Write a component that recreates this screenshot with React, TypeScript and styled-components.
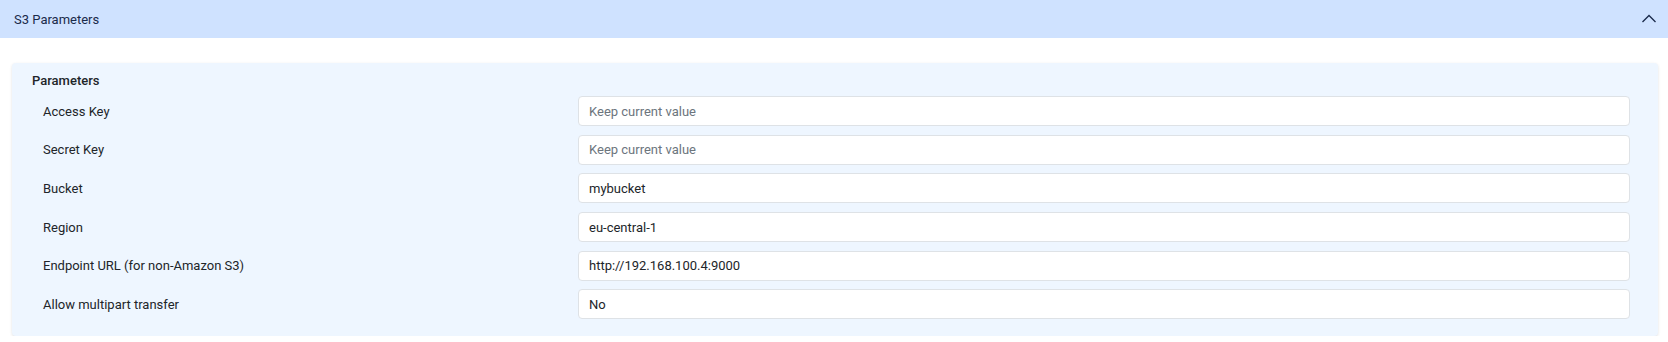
import React from "react";
import styled, { createGlobalStyle } from "styled-components";

const Global = createGlobalStyle`
  html, body { margin: 0; padding: 0; background: #ffffff; }
  body { font-family: Roboto, "Liberation Sans", Arial, sans-serif; font-size: 13px; color: #212529; }
  * { box-sizing: border-box; }
`;

const Header = styled.div`
  height: 38px;
  background: #cfe2ff;
  color: #1a2a4a;
  display: flex;
  align-items: center;
  justify-content: space-between;
  padding: 0 11px 0 14px;
  font-size: 13px;
`;

const Body = styled.div`
  padding: 25px 10px 0 12px;
`;

const Card = styled.div`
  background: #eef6ff;
  border-radius: 4px;
  box-shadow: 0 1px 3px rgba(0, 0, 0, 0.12);
  padding: 9px 28px 17px 20px;
`;

const Title = styled.div`
  font-weight: 500;
  line-height: 18px;
  margin-bottom: 6px;
  color: #212529;
`;

const Grid = styled.div`
  display: grid;
  grid-template-columns: 546px 1fr;
  row-gap: 8.7px;
`;

const Label = styled.div`
  padding-left: 11px;
  display: flex;
  align-items: center;
  height: 30px;
  color: #212529;
`;

const Field = styled.div<{ $placeholder?: boolean }>`
  height: 30px;
  background: #ffffff;
  border: 1px solid #dee2e6;
  border-radius: 4px;
  padding: 0 10px;
  display: flex;
  align-items: center;
  color: ${(p) => (p.$placeholder ? "#6c757d" : "#212529")};
`;

const rows: { label: string; value: string; placeholder?: boolean }[] = [
  { label: "Access Key", value: "Keep current value", placeholder: true },
  { label: "Secret Key", value: "Keep current value", placeholder: true },
  { label: "Bucket", value: "mybucket" },
  { label: "Region", value: "eu-central-1" },
  { label: "Endpoint URL (for non-Amazon S3)", value: "http://192.168.100.4:9000" },
  { label: "Allow multipart transfer", value: "No" },
];

const Chevron = () => (
  <svg width="16" height="16" viewBox="0 0 16 16" fill="none">
    <path d="M1.5 11 L8 4.5 L14.5 11" stroke="#1a2a4a" strokeWidth="1.3" />
  </svg>
);

export default function App() {
  return (
    <>
      <Global />
      <Header>
        <span>S3 Parameters</span>
        <Chevron />
      </Header>
      <Body>
        <Card>
          <Title>Parameters</Title>
          <Grid>
            {rows.map((r) => (
              <React.Fragment key={r.label}>
                <Label>{r.label}</Label>
                <Field $placeholder={r.placeholder}>{r.value}</Field>
              </React.Fragment>
            ))}
          </Grid>
        </Card>
      </Body>
    </>
  );
}
